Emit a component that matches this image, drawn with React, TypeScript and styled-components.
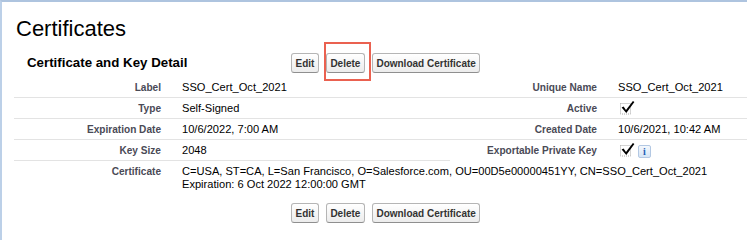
import * as React from 'react'
import styled, { createGlobalStyle } from 'styled-components'

const GlobalStyle = createGlobalStyle`
  html, body {
    margin: 0;
    padding: 0;
    background: #fff;
    overflow: hidden;
  }
  body {
    font-family: "Liberation Sans", Arial, sans-serif;
    color: #000;
  }
`

const SFrame = styled.div`
  width: 100%;
  height: 240px;
  box-sizing: border-box;
  border-top: 2px solid #aec4df;
  border-left: 2px solid #bcd0e8;
  padding: 14px 0 0 12px;
`

const STitle = styled.h1`
  margin: 0;
  padding-left: 2px;
  font-size: 22px;
  font-weight: normal;
  line-height: 26px;
`

const SBar = styled.div<{ top: number }>`
  display: grid;
  grid-template-columns: 277px auto;
  align-items: center;
  height: 20px;
  margin-top: ${({ top }) => top}px;
`

const SBlockTitle = styled.h2`
  margin: 0;
  padding-left: 13px;
  font-size: 13.3px;
  font-weight: bold;
  line-height: 20px;
`

const SButtons = styled.div`
  display: flex;
  gap: 7px;
`

const SButton = styled.button`
  height: 20px;
  box-sizing: border-box;
  padding: 0 3.5px;
  font-family: "Liberation Sans", Arial, sans-serif;
  font-size: 10px;
  font-weight: bold;
  color: #333;
  border: 1px solid #b5b5b5;
  border-bottom-color: #8f8f8f;
  border-radius: 3px;
  background: linear-gradient(#ffffff, #ececec);
  cursor: pointer;
`

// red annotation box drawn over the Delete button
const SHighlight = styled.span`
  position: relative;
  display: inline-flex;

  &::after {
    content: '';
    position: absolute;
    top: -11px;
    bottom: -8px;
    left: -2px;
    right: -6px;
    border: 2px solid #ea6150;
    pointer-events: none;
  }
`

const SDetail = styled.div`
  display: grid;
  grid-template-columns: 157px 279px 157px 1fr;
  margin-top: 4px;
`

const SLabel = styled.div<{ line?: boolean }>`
  padding: 4px 10px 3px 0;
  text-align: right;
  font-size: 10.1px;
  font-weight: bold;
  line-height: 13px;
  color: #4a4a56;
  border-bottom: 1px solid ${({ line }) => (line ? '#e3e3e3' : 'transparent')};
`

const SValue = styled.div<{ line?: boolean; span?: number }>`
  padding: 4px 0 3px 11px;
  font-size: 11.1px;
  line-height: 13px;
  color: #000;
  white-space: nowrap;
  grid-column: span ${({ span }) => span || 1};
  border-bottom: 1px solid ${({ line }) => (line ? '#e3e3e3' : 'transparent')};
`

const SMarks = styled.div`
  display: flex;
  align-items: flex-end;
  gap: 3px;
  height: 13px;
`

const SInfo = styled.span`
  display: inline-flex;
  align-items: center;
  justify-content: center;
  width: 11px;
  height: 11px;
  margin-bottom: -1px;
  border: 1px solid #b3c8e3;
  border-radius: 2px;
  background: linear-gradient(#f4f8fd, #d6e5f5);
  color: #1f5fb5;
  font-family: "Liberation Serif", serif;
  font-size: 10px;
  font-weight: bold;
`

const Checked = () => (
  <svg width="17" height="15" viewBox="0 0 17 15" style={{ display: 'block', marginTop: -1 }}>
    <rect x="2.5" y="3.5" width="10" height="10.5" fill="none" stroke="#a8a8a8" strokeWidth="1" strokeDasharray="1 1" />
    <path d="M3.6 7.6 L5.6 6.6 L8 9.9 L14.9 1 L16.4 2 L8.3 13.1 Z" fill="#000" />
  </svg>
)

const ActionButtons = () => (
  <SButtons>
    <SButton>Edit</SButton>
    <SButton>Delete</SButton>
    <SButton>Download Certificate</SButton>
  </SButtons>
)

export default function App() {
  return (
    <>
      <GlobalStyle />
      <SFrame>
        <STitle>Certificates</STitle>

        <SBar top={11}>
          <SBlockTitle>Certificate and Key Detail</SBlockTitle>
          <SButtons>
            <SButton>Edit</SButton>
            <SHighlight>
              <SButton>Delete</SButton>
            </SHighlight>
            <SButton>Download Certificate</SButton>
          </SButtons>
        </SBar>

        <SDetail>
          <SLabel line>Label</SLabel>
          <SValue line>SSO_Cert_Oct_2021</SValue>
          <SLabel line>Unique Name</SLabel>
          <SValue line>SSO_Cert_Oct_2021</SValue>

          <SLabel line>Type</SLabel>
          <SValue line>Self-Signed</SValue>
          <SLabel line>Active</SLabel>
          <SValue line>
            <SMarks>
              <Checked />
            </SMarks>
          </SValue>

          <SLabel line>Expiration Date</SLabel>
          <SValue line>10/6/2022, 7:00 AM</SValue>
          <SLabel line>Created Date</SLabel>
          <SValue line>10/6/2021, 10:42 AM</SValue>

          <SLabel line>Key Size</SLabel>
          <SValue line>2048</SValue>
          <SLabel>Exportable Private Key</SLabel>
          <SValue>
            <SMarks>
              <Checked />
              <SInfo>i</SInfo>
            </SMarks>
          </SValue>

          <SLabel>Certificate</SLabel>
          <SValue span={3}>
            C=USA, ST=CA, L=San Francisco, O=Salesforce.com, OU=00D5e00000451YY, CN=SSO_Cert_Oct_2021
            <br />
            Expiration: 6 Oct 2022 12:00:00 GMT
          </SValue>
        </SDetail>

        <SBar top={8}>
          <div />
          <ActionButtons />
        </SBar>
      </SFrame>
    </>
  )
}
